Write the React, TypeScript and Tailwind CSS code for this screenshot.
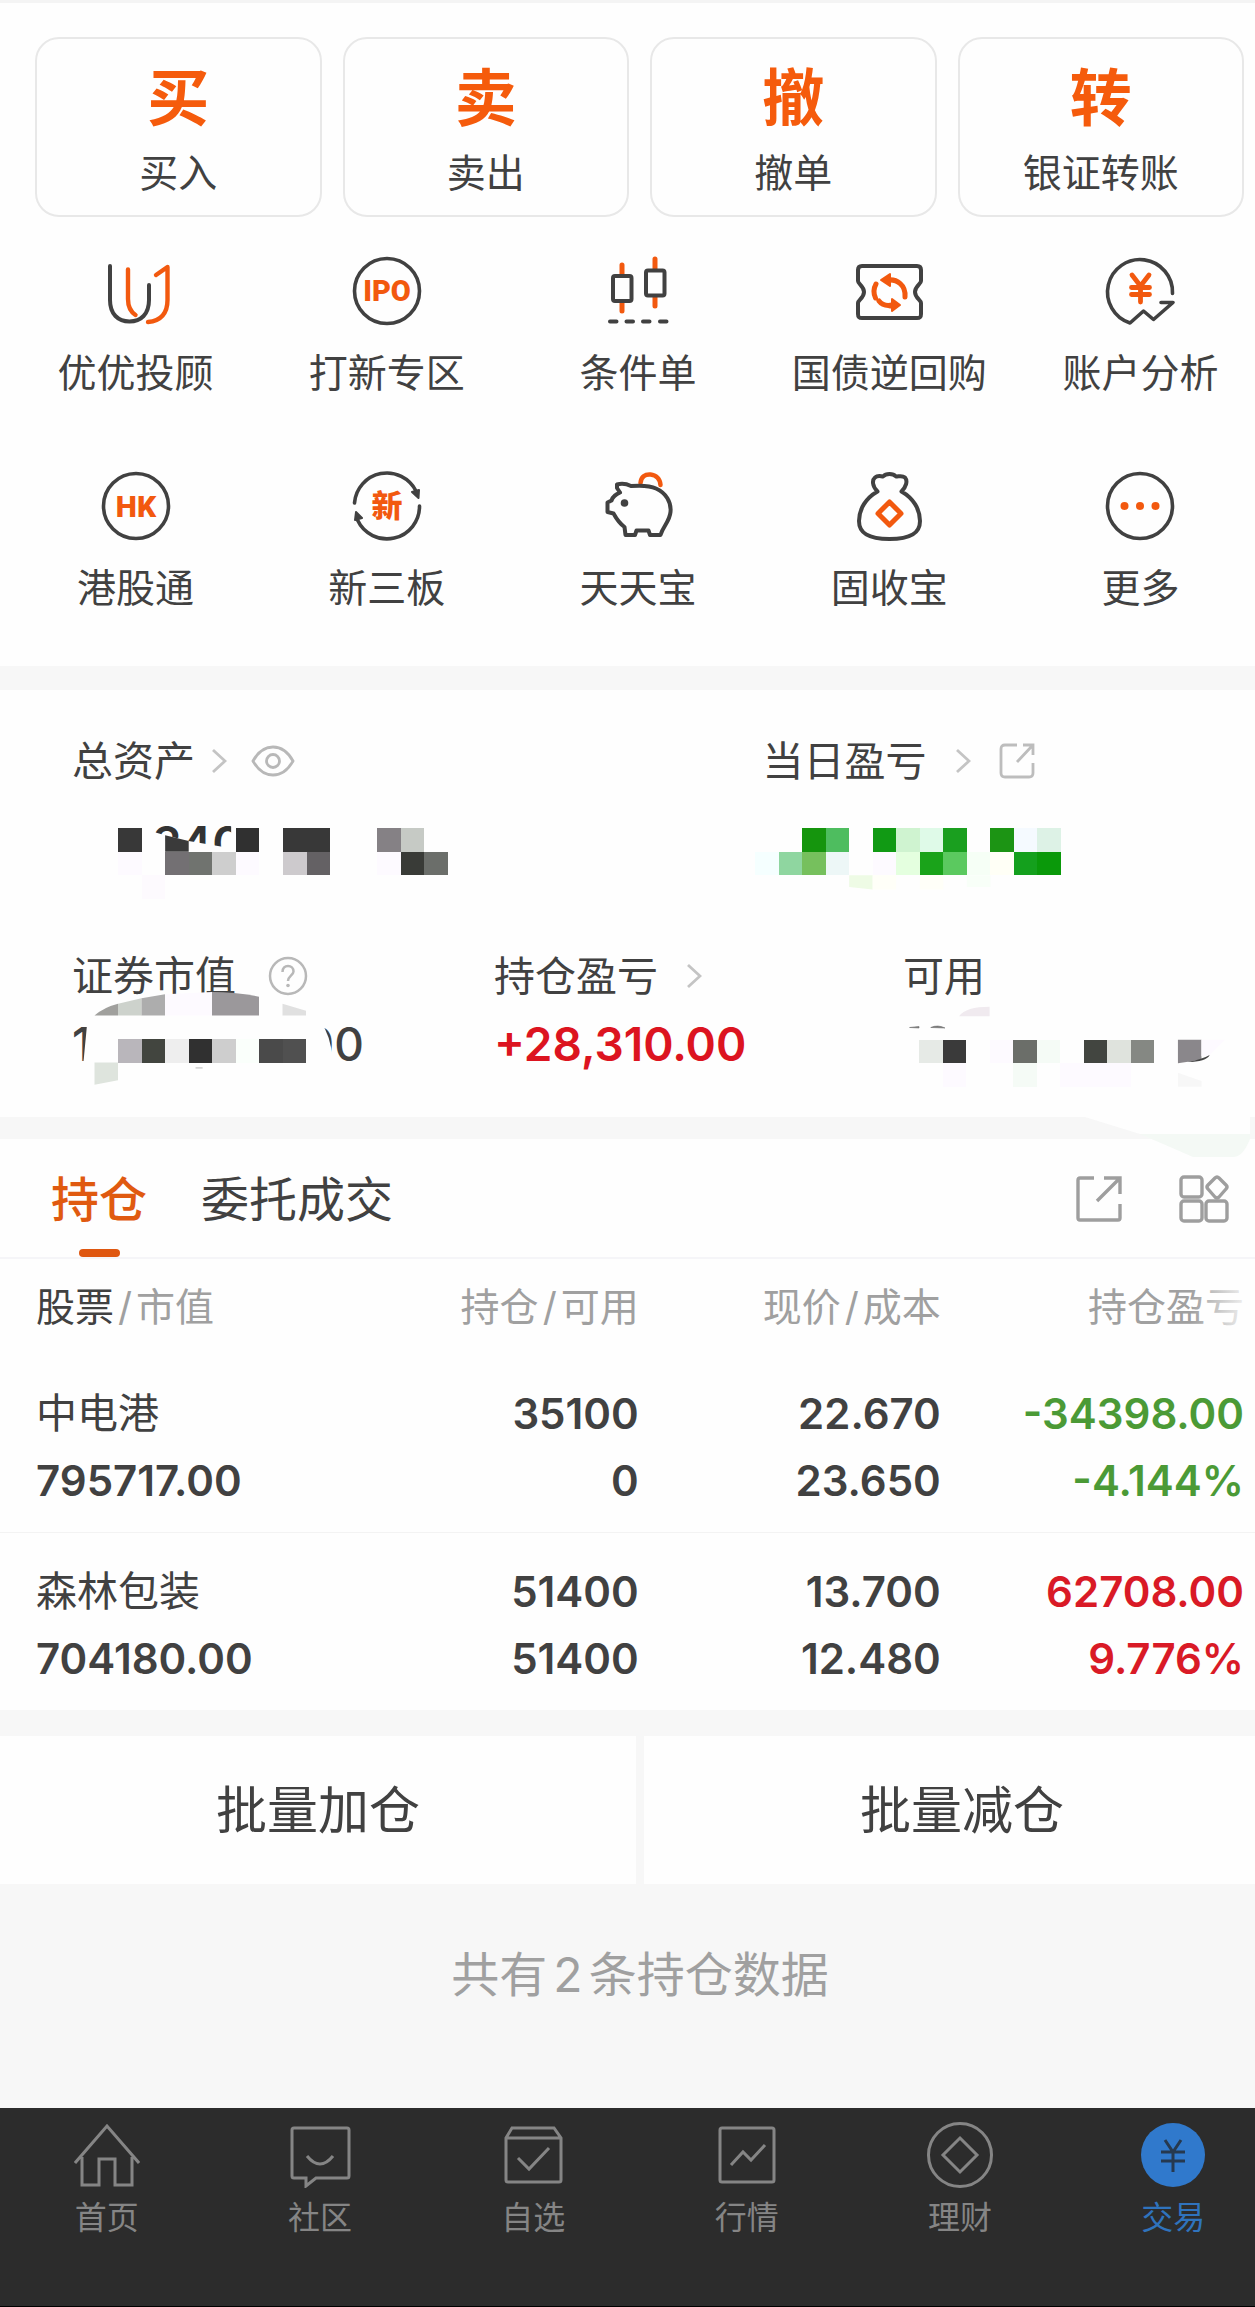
import { useState } from 'react';
import type { ReactNode } from 'react';
import clsx from 'clsx';

const DARK = '#414141';
const ORANGE = '#f2590f';

const IconBox = ({ children }: { children: ReactNode }) => (
  <svg
    viewBox="0 0 68 68"
    className="w-[68px] h-[68px] overflow-visible"
    fill="none"
    stroke={DARK}
    strokeWidth="3.6"
    strokeLinecap="round"
    strokeLinejoin="round"
    aria-hidden="true"
  >
    {children}
  </svg>
);

const AdvisorIcon = () => (
  <IconBox>
    <path d="M8 9V43C8 57 16 64.500 27.500 64.500S47 57 47 43V28" strokeWidth="4" />
    <path d="M26 12.500V42C26 50 29 55 33.500 58" stroke={ORANGE} strokeWidth="4.400" />
    <path d="M46 65C59 64 65.500 56 65.500 43V10L54 18" stroke={ORANGE} strokeWidth="4.400" />
  </IconBox>
);

const IpoIcon = () => (
  <IconBox>
    <circle cx="34" cy="34" r="32.500" />
    <text x="34" y="44" textAnchor="middle" fill={ORANGE} stroke="none" className="font-['Roboto',sans-serif] text-[29px] font-black">IPO</text>
  </IconBox>
);

const ConditionIcon = () => (
  <IconBox>
    <path d="M18 8V18M18 45V54M51 2V12M51 40V49" stroke={ORANGE} strokeWidth="5" />
    <rect x="9" y="19" width="18.500" height="25" rx="2" strokeWidth="4" />
    <rect x="42" y="13.500" width="18.500" height="25" rx="2" strokeWidth="4" />
    <path d="M6 64.500H12.500M22.500 64.500H29M39 64.500H45.500M56 64.500H62.500" strokeWidth="4" />
  </IconBox>
);

const RepoIcon = () => (
  <IconBox>
    <path
      d="M7 9H62C65 9 66 10.500 66 13V24C66 27 60 29 60 35S66 43 66 46V57C66 60 65 61 62 61H7C4 61 3 60 3 57V46C3 43 9 41 9 35S3 27 3 24V13C3 10.500 4 9 7 9Z"
      strokeWidth="4"
    />
    <path d="M20.500 41A15.500 15.500 0 0 1 21 27M33 23C42 22 51 28 50 40M35 49C41 49 36 48 37 48.500M24 44C27 48 32 49 37 48" stroke={ORANGE} strokeWidth="5" />
    <path d="M35 17V29L26 23ZM37 42V54L45 48Z" fill={ORANGE} stroke={ORANGE} strokeWidth="2" />
  </IconBox>
);

const AnalysisIcon = () => (
  <IconBox>
    <path d="M66.500 36.500A32.500 32.500 0 1 0 24 66L37.500 54L47.500 62.500L67 45.500H55" />
    <g stroke={ORANGE} strokeWidth="4.800">
      <path d="M26 18L34.500 29L43 18M34.500 29V45M25.500 30.500H43.500M25.500 37.500H43.500" />
    </g>
  </IconBox>
);

const HkIcon = () => (
  <IconBox>
    <circle cx="34" cy="34" r="32.500" />
    <text x="34" y="45" textAnchor="middle" fill={ORANGE} stroke="none" className="font-['Roboto',sans-serif] text-[30px] font-black">HK</text>
  </IconBox>
);

const NewBoardIcon = () => (
  <IconBox>
    <path d="M1.500 31A32.500 32.500 0 0 1 63 19M66.500 34A32.500 32.500 0 0 1 4.500 48" />
    <path d="M66 18L65.500 26L59 20ZM2 48L3 40L9 46Z" fill={DARK} strokeWidth="2" />
    <text x="34" y="45" textAnchor="middle" fill={ORANGE} stroke="none" className="font-['Noto_Sans_CJK_SC',sans-serif] text-[31px] font-black">新</text>
  </IconBox>
);

const PiggyIcon = () => (
  <IconBox>
    <path d="M36.500 11C37 5 41 2 46.500 2.500C52 3 56 7 56.500 13" stroke={ORANGE} strokeWidth="4.500" />
    <path
      d="M13 12.500C18 11 23 12 27 14C34 13.500 45 13 52 16.500C62 21 67.500 30 66.500 40C65.500 50 59 54 56.500 63H46L44.500 58.500H32.500L31 63H21.500L20.500 55C15 51 12 46 9.500 41.500L3.500 40V30.500L7.500 28.500C9 24 12 22.500 16 20.500L13 16Z"
      strokeWidth="4"
    />
    <circle cx="20.500" cy="31" r="3.800" fill={DARK} stroke="none" />
  </IconBox>
);

const BagIcon = () => (
  <IconBox>
    <path
      d="M22.500 19.500C17 14 17 8 20 5.500C23 3 26 4.500 28 4.500C31 1 38 1 41 4.500C44 4.500 47 3 50 5.500C53 9 51 15 46.500 19.500C58 26 65 37 65 49C65 61 56 67 34.500 67S4 61 4 49C4 37 11 26 22.500 19.500Z"
      strokeWidth="4"
    />
    <path d="M34.500 30L46 41.500L34.500 53L23 41.500Z" stroke={ORANGE} strokeWidth="5" />
  </IconBox>
);

const MoreIcon = () => (
  <IconBox>
    <circle cx="34" cy="34" r="32.500" />
    <g fill={ORANGE} stroke="none">
      <circle cx="18.500" cy="34" r="4" />
      <circle cx="34" cy="34" r="4" />
      <circle cx="49.500" cy="34" r="4" />
    </g>
  </IconBox>
);

const ChevronIcon = () => (
  <svg viewBox="0 0 16 26" className="w-4 h-[26px]" fill="none" stroke="#c4c4c4" strokeWidth="2.800" aria-hidden="true">
    <path d="M2 2L14 13L2 24" />
  </svg>
);

const EyeIcon = () => (
  <svg viewBox="0 0 44 32" className="w-11 h-8" fill="none" stroke="#b8b8b8" strokeWidth="2.800" aria-hidden="true">
    <path d="M2 16C7 7 14 2 22 2S37 7 42 16C37 25 30 30 22 30S7 25 2 16Z" />
    <circle cx="22" cy="16" r="6.500" />
  </svg>
);

const ShareIcon = () => (
  <svg viewBox="0 0 36 36" className="w-9 h-9" fill="none" stroke="#bdbdbd" strokeWidth="2.800" aria-hidden="true">
    <path d="M18 2H6Q2 2 2 6V30Q2 34 6 34H30Q34 34 34 30V20M24 2H34V12M33 3L18 19" />
  </svg>
);

const HelpIcon = () => (
  <svg viewBox="0 0 40 40" className="w-10 h-10" fill="none" stroke="#b8b8b8" strokeWidth="2.500" aria-hidden="true">
    <circle cx="20" cy="20" r="18" />
    <path d="M14.500 16C14.500 12 17 10 20 10S25.500 12 25.500 15.500C25.500 19 20 20 20 25" />
    <circle cx="20" cy="29.500" r="1.800" fill="#b8b8b8" stroke="none" />
  </svg>
);

type Cell = [col: number, row: number, width: number, color: string];

// 打码色块，坐标以格为单位
const Cells = ({ cells }: { cells: Cell[] }) => (
  <>
    {cells.map(([col, row, width, color]) => (
      <rect key={`${col}-${row}`} x={col} y={row} width={width} height={1} fill={color} shapeRendering="crispEdges" />
    ))}
  </>
);

const totalCells: Cell[] = [
  [0, 0, 1, '#383838'], [5, 0, 1, '#303030'], [7, 0, 2, '#383838'], [11, 0, 1, '#858185'], [12, 0, 1, '#c6cac5'],
  [0, 1, 1, '#fdfaff'], [2, 1, 1, '#737073'], [3, 1, 1, '#70736f'], [4, 1, 1, '#cecece'], [5, 1, 1, '#fdfaff'],
  [7, 1, 1, '#cdcacd'], [8, 1, 1, '#646164'], [11, 1, 1, '#fdfaff'], [12, 1, 1, '#393b37'], [13, 1, 1, '#6b6e6a'],
  [1, 2, 1, '#fdfafe'],
];

const dailyCells: Cell[] = [
  [2, 0, 1, '#15950d'], [3, 0, 1, '#4ebd5f'], [5, 0, 1, '#119a14'], [6, 0, 1, '#cff3d0'], [7, 0, 1, '#dffae8'],
  [8, 0, 1, '#1a9f1f'], [10, 0, 1, '#1c9414'], [11, 0, 1, '#f5faff'], [12, 0, 1, '#ddf2e6'],
  [0, 1, 1, '#f5ffff'], [1, 1, 1, '#8fd6a0'], [2, 1, 1, '#76c05d'], [3, 1, 1, '#edf7f7'], [5, 1, 1, '#fdfaff'],
  [6, 1, 1, '#e4ffdf'], [7, 1, 1, '#1aa31a'], [8, 1, 1, '#5bc95f'], [9, 1, 1, '#f6fff6'], [10, 1, 1, '#fffff6'],
  [11, 1, 1, '#14a01d'], [12, 1, 1, '#0a990a'],
];

const marketCells: Cell[] = [
  [1, 2, 1, '#b9b6bb'], [2, 2, 1, '#42453f'], [3, 2, 1, '#eeeeee'], [4, 2, 1, '#303030'], [5, 2, 1, '#cecece'],
  [6, 2, 1, '#fafffb'], [7, 2, 1, '#4a4a4a'], [8, 2, 1, '#505050'],
];

const usableCells: Cell[] = [
  [0, 1, 1, '#e6eae6'], [1, 1, 1, '#3a3a3a'], [3, 1, 1, '#fdfaff'], [4, 1, 1, '#6b6e69'], [5, 1, 1, '#f5fbf6'],
  [7, 1, 1, '#424540'], [8, 1, 1, '#dfe3dd'], [9, 1, 1, '#858883'],
  [1, 2, 1, '#fdfaff'], [4, 2, 1, '#f5fbf6'], [6, 2, 3, '#fdfaff'],
];

const tradeActions = [
  { mark: '买', label: '买入' },
  { mark: '卖', label: '卖出' },
  { mark: '撤', label: '撤单' },
  { mark: '转', label: '银证转账' },
];

const services = [
  { label: '优优投顾', Icon: AdvisorIcon },
  { label: '打新专区', Icon: IpoIcon },
  { label: '条件单', Icon: ConditionIcon },
  { label: '国债逆回购', Icon: RepoIcon },
  { label: '账户分析', Icon: AnalysisIcon },
  { label: '港股通', Icon: HkIcon },
  { label: '新三板', Icon: NewBoardIcon },
  { label: '天天宝', Icon: PiggyIcon },
  { label: '固收宝', Icon: BagIcon },
  { label: '更多', Icon: MoreIcon },
];

const holdings = [
  { name: '中电港', value: '795717.00', amount: '35100', usable: '0', price: '22.670', cost: '23.650', profit: '-34398.00', rate: '-4.144%', up: false },
  { name: '森林包装', value: '704180.00', amount: '51400', usable: '51400', price: '13.700', cost: '12.480', profit: '62708.00', rate: '9.776%', up: true },
];

const navItems = [
  { label: '首页', icon: <path d="M1 41L33 4L65 41M8 35V63H25V37H41V63H58V35" /> },
  { label: '社区', icon: <><path d="M7 6H60Q62 6 62 8V54Q62 56 60 56H29L19 64V56H7Q5 56 5 54V8Q5 6 7 6Z" /><path d="M20 34Q33 50 46 34" /></> },
  { label: '自选', icon: <><path d="M12 6H54L61 16V58Q61 60 59 60H8Q6 60 6 58V16ZM6 16H61" /><path d="M18 36L29 47L49 26" /></> },
  { label: '行情', icon: <><rect x="6" y="6" width="54" height="54" rx="2" /><path d="M17 43L29 30L37 38L51 23" /></> },
  { label: '理财', icon: <><circle cx="33" cy="33" r="31.500" /><path d="M33 16L50 33L33 50L16 33Z" /></> },
  { label: '交易', icon: <><circle cx="33" cy="33" r="32" fill="#3079cc" stroke="none" /><path d="M25 18L33 30L41 18M33 30V50M21 30H45M21 39H45" stroke="#26394f" /></> },
];

const HeaderPair = ({ first, second, strong }: { first: string; second: string; strong?: boolean }) => (
  <>
    <span className={clsx(strong && 'text-[#414141]')}>{first}</span>
    <span className="mx-1">/</span>
    {second}
  </>
);

const AssetLabel = ({ text, children }: { text: string; children?: ReactNode }) => (
  <div className="flex items-center h-14 text-[41px] leading-[56px]">
    {text}
    {children}
  </div>
);

const App = () => {
  const [tab, setTab] = useState('持仓');
  const [activeNav, setActiveNav] = useState('交易');

  return (
    <div className="overflow-x-hidden bg-[#f7f7f7] text-[#414141] font-['Inter','Noto_Sans_CJK_SC',sans-serif]">
      <div className="-mr-[25px]">
        <section className="bg-[#fefefe] border-t-[3px] border-[#f4f4f4] pt-[34px] pb-[50px]">
          <div className="grid grid-cols-4 gap-[21px] pl-[35px] pr-9">
            {tradeActions.map(({ mark, label }) => (
              <button
                key={label}
                className="flex flex-col items-center h-[180px] pt-5 rounded-3xl border-2 border-[#e8e8e8]"
              >
                <span className="text-[62px] leading-[80px] font-bold text-[#f55b0c]">{mark}</span>
                <span className="mt-1 text-[39px] leading-[60px]">{label}</span>
              </button>
            ))}
          </div>
          <div className="grid grid-cols-5 gap-y-[71px] pl-2.5 pr-3.5 mt-10">
            {services.map(({ label, Icon }) => (
              <button key={label} className="flex flex-col items-center">
                <Icon />
                <span className="mt-5 text-[39px] leading-[56px] whitespace-nowrap">{label}</span>
              </button>
            ))}
          </div>
        </section>

        <section className="mt-6 bg-[#fefefe] pl-[72px] pt-[43px] pb-[45px]">
          <div className="grid grid-cols-[690fr_517fr]">
            <div>
              <AssetLabel text="总资产">
                <span className="flex ml-4"><ChevronIcon /></span>
                <button aria-label="隐藏金额" className="ml-6"><EyeIcon /></button>
              </AssetLabel>
              <div className="relative h-14 mt-[25px]">
                <svg viewBox="0 0 14 3" className="absolute left-[46px] top-[14px] w-[330px] h-[71px] overflow-visible" aria-hidden="true">
                  <text x="1.450" y="1.360" fill="#333333" fontSize="2" fontWeight="600">240</text>
                  <path d="M1.300 .1L2 .3L3 .55L4.800 .85V-.2H7V2H1.300Z" fill="#fefefe" />
                  <path d="M2 .3L3 .55V1H2Z" fill="#3a3a3a" />
                  <Cells cells={totalCells} />
                </svg>
              </div>
            </div>
            <div>
              <AssetLabel text="当日盈亏">
                <span className="flex ml-7"><ChevronIcon /></span>
                <button aria-label="分享当日盈亏" className="ml-7"><ShareIcon /></button>
              </AssetLabel>
              <div className="relative h-14 mt-[25px]">
                <svg viewBox="0 0 13 3" className="absolute -left-2 top-[14px] w-[306px] h-[71px]" aria-hidden="true">
                  <Cells cells={dailyCells} />
                  <path d="M4 2H5V2.600L4 2.500Z" fill="#eefbe5" />
                  <path d="M5 2H6V2.600H5ZM7 2H8V2.600H7Z" fill="#fffff8" />
                  <path d="M9 2H10V2.500H9Z" fill="#f8fff8" />
                </svg>
              </div>
            </div>
          </div>

          <div className="grid grid-cols-[422fr_409fr_377fr] mt-[78px]">
            <div>
              <AssetLabel text="证券市值">
                <button aria-label="证券市值说明" className="ml-8"><HelpIcon /></button>
              </AssetLabel>
              <div className="relative flex justify-between w-[292px] h-14 mt-3 text-[46px] leading-[56px] font-medium">
                <span>1</span>
                <span>00</span>
                <svg viewBox="0 0 10 4" className="absolute left-[22px] -top-6 w-[236px] h-[94px] overflow-visible" aria-hidden="true">
                  <path d="M-.3 1.200H9.600Q10.300 2.300 10 3.300H-.5Z" fill="#fefefe" />
                  <path d="M0 1Q.4 .65 1 .5V1Z" fill="#a0a09d" />
                  <path d="M1 .5L2 .27V1H1Z" fill="#cdd2cc" />
                  <path d="M2 .27L3 .1V1H2Z" fill="#adadad" />
                  <path d="M3 .1L5 0V1H3Z" fill="#fdfaff" />
                  <path d="M5 0Q6 0 7 .2V1H5Z" fill="#9b989b" />
                  <path d="M8 .5L9 .8V1H8Z" fill="#e0e0e0" />
                  <Cells cells={marketCells} />
                  <path d="M0 3H1V3.750L0 3.950Z" fill="#dee4dd" />
                  <path d="M4.300 3.200H4.600V3.260H4.300Z" fill="#cccccc" />
                </svg>
              </div>
            </div>
            <div>
              <AssetLabel text="持仓盈亏">
                <span className="flex ml-7"><ChevronIcon /></span>
              </AssetLabel>
              <p className="mt-3 text-[46px] leading-[56px] font-semibold text-[#dc1420]">+28,310.00</p>
            </div>
            <div>
              <AssetLabel text="可用" />
              <div className="relative h-14 mt-3">
                <svg viewBox="0 0 13 3" className="absolute left-4 top-0 w-[306px] h-[71px] overflow-visible" aria-hidden="true">
                  <path d="M1.700 0Q2 -.4 3 -.4V0Z" fill="#f0eaef" />
                  <path d="M-.4 .48L0 .44V.5ZM.5 .48Q.8 .35 1.100 .5Z" fill="#777777" stroke="#777777" strokeWidth=".03" />
                  <Cells cells={usableCells} />
                  <path d="M11 1H12V1.850L11 2Z" fill="#8a878b" />
                  <path d="M12 1H13L12.300 1.700H12Z" fill="#fdfaff" />
                  <path d="M11.400 1.950Q12 1.850 12.350 1.650Q12.200 1.950 11.400 1.950Z" fill="#444444" />
                  <path d="M11 2.400L12 2.750V3H11Z" fill="#f7f7f7" />
                </svg>
              </div>
            </div>
          </div>
        </section>

        <div className="relative h-[22px]">
          <svg viewBox="0 0 170 40" className="absolute right-[25px] top-0 w-[170px] h-10" aria-hidden="true">
            <path d="M0 0H165V17H55Z" fill="#fefefe" />
            <path d="M55 17H165V22Q158 40 148 40H108Z" fill="#f4f9f5" />
          </svg>
        </div>

        <section className="bg-[#fefefe]">
          <div className="flex items-center justify-between h-[120px] px-[51px] border-b-2 border-[#f5f5f8]">
            <div className="flex h-full gap-[54px]" role="tablist">
              {['持仓', '委托成交'].map((name) => (
                <button
                  key={name}
                  role="tab"
                  aria-selected={tab === name}
                  onClick={() => setTab(name)}
                  className="flex flex-col items-center justify-between h-full pt-[29px]"
                >
                  <span className={clsx('text-[48px] leading-[64px]', tab === name && 'font-medium text-[#e05a10]')}>{name}</span>
                  <span className={clsx('w-[41px] h-2 rounded-sm', tab === name && 'bg-[#df5710]')} />
                </button>
              ))}
            </div>
            <div className="flex items-center gap-[57px] pt-0.5">
              <button aria-label="分享持仓">
                <svg viewBox="0 0 46 46" className="w-[46px] h-[46px]" fill="none" stroke="#9e9e9e" strokeWidth="3.400" aria-hidden="true">
                  <path d="M18 2H4Q2 2 2 4V42Q2 44 4 44H42Q44 44 44 42V28M28 2H44V18M43 3L21 25" />
                </svg>
              </button>
              <button aria-label="切换视图">
                <svg viewBox="0 0 50 48" className="w-[50px] h-12" fill="none" stroke="#9e9e9e" strokeWidth="3.400" strokeLinejoin="round" aria-hidden="true">
                  <rect x="2" y="2" width="21" height="20" rx="3" />
                  <rect x="2" y="26" width="21" height="20" rx="3" />
                  <rect x="27" y="26" width="21" height="20" rx="3" />
                  <path d="M36 3Q38 1 40 3L47 10Q49 12 47 14L40 22Q38 24 36 22L29 14Q27 12 29 10Z" />
                </svg>
              </button>
            </div>
          </div>

          <table className="w-full table-fixed">
            <thead>
              <tr className="h-24 text-[39px] leading-[56px] text-[#a0a0a0] whitespace-nowrap">
                <th className="w-[26%] pl-9 text-left font-normal">
                  <HeaderPair first="股票" second="市值" strong />
                </th>
                <th className="w-[23.9%] text-right font-normal">
                  <HeaderPair first="持仓" second="可用" />
                </th>
                <th className="w-[23.6%] text-right font-normal">
                  <HeaderPair first="现价" second="成本" />
                </th>
                <th className="relative pr-9 text-right font-normal">
                  持仓盈亏
                  <span className="absolute inset-y-0 right-[25px] w-16 bg-linear-to-r from-transparent to-[#fefefe]" />
                </th>
              </tr>
            </thead>
            <tbody className="text-[42px] leading-[67px] font-semibold">
              {holdings.map((item) => (
                <tr key={item.name} className="border-b border-[#f3f3f3] last:border-b-0">
                  <td className="pl-9 pt-[25px] pb-[18px]">
                    <div className="text-[41px] font-normal">{item.name}</div>
                    <div>{item.value}</div>
                  </td>
                  <td className="pt-[25px] pb-[18px] text-right">
                    <div>{item.amount}</div>
                    <div>{item.usable}</div>
                  </td>
                  <td className="pt-[25px] pb-[18px] text-right">
                    <div>{item.price}</div>
                    <div>{item.cost}</div>
                  </td>
                  <td className={clsx('pr-9 pt-[25px] pb-[18px] text-right', item.up ? 'text-[#d91a26]' : 'text-[#4b9a36]')}>
                    <div>{item.profit}</div>
                    <div>{item.rate}</div>
                  </td>
                </tr>
              ))}
            </tbody>
          </table>
        </section>

        <div className="grid grid-cols-2 gap-2 mt-[26px] text-[51px] leading-[68px]">
          <button className="pt-[41px] pb-[39px] bg-[#fefefe]">批量加仓</button>
          <button className="pt-[41px] pb-[39px] bg-[#fefefe]">批量减仓</button>
        </div>

        <p className="pt-[59px] pb-[101px] text-center text-[48px] leading-[64px] text-[#a0a0a0]">
          共有<span className="mx-1.5">2</span>条持仓数据
        </p>

        <nav className="grid grid-cols-6 h-[199px] pt-[14px] bg-[#2c2c2c] border-b border-black">
          {navItems.map(({ label, icon }) => (
            <button
              key={label}
              onClick={() => setActiveNav(label)}
              className={clsx('flex flex-col items-center', activeNav === label ? 'text-[#2f73bd]' : 'text-[#858585]')}
            >
              <svg viewBox="0 0 66 66" className="w-[66px] h-[66px]" fill="none" stroke="#858585" strokeWidth="3" aria-hidden="true">
                {icon}
              </svg>
              <span className="mt-2 text-[32px] leading-[44px]">{label}</span>
            </button>
          ))}
        </nav>
      </div>
    </div>
  );
};

export default App;
